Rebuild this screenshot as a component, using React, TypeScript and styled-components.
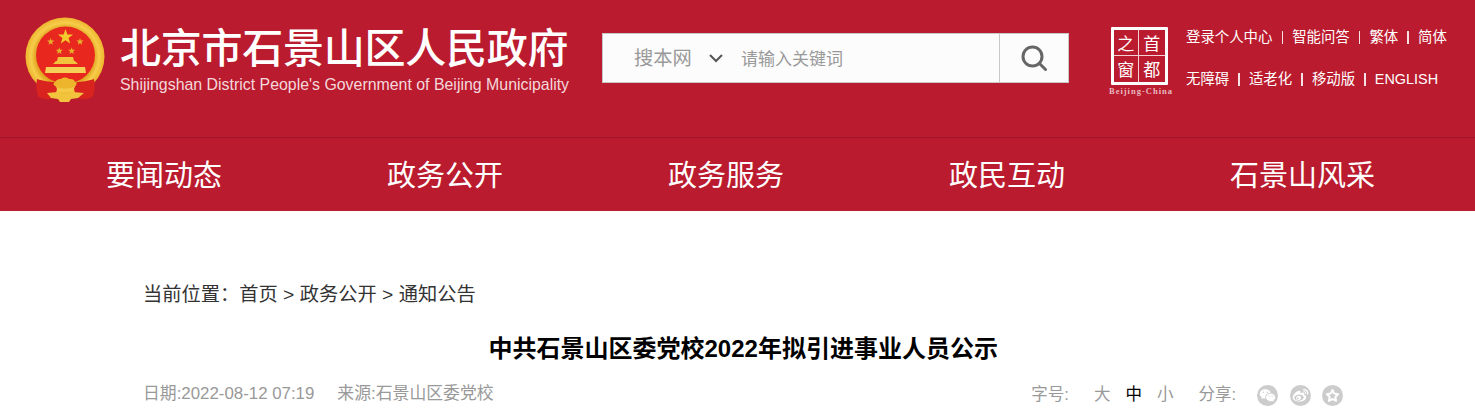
import React from "react";
import styled, { createGlobalStyle } from "styled-components";
import { RiWechatFill, RiWeiboFill } from "react-icons/ri";

const Global = createGlobalStyle`
  html, body { margin: 0; padding: 0; background: #fff; overflow: hidden; }
  body { font-family: "Liberation Sans", "Noto Sans CJK SC", sans-serif; }
`;
const Page = styled.div`width: 1475px; height: 415px; overflow: hidden;`;
const Header = styled.header`background: #bb1b2e; height: 211px;`;
const TopBar = styled.div`
  height: 138px; box-sizing: border-box; border-bottom: 1px solid #a3162a;
  display: flex; align-items: flex-start; padding-left: 25px;
`;
const Emblem = styled.svg`width: 80px; height: 86px; margin-top: 17px; flex: none;`;
const Brand = styled.div`margin-left: 15px; width: 460px; flex: none;`;
const BrandName = styled.div`
  margin-top: 21px; font: 500 41px/48px "Noto Sans CJK SC", sans-serif; color: #fff; white-space: nowrap; letter-spacing: -0.25px;
`;
const BrandEn = styled.div`
  margin-top: 6px; font: 15.9px/20px "Liberation Sans", sans-serif; color: #f3d8dc; white-space: nowrap;
`;
const Search = styled.div`
  margin: 33px 0 0 22px; width: 467px; height: 50px; box-sizing: border-box; flex: none;
  background: #fcfcfc; border: 1px solid #c8c8c8; display: flex; align-items: center;
`;
const Scope = styled.span`
  margin: -2px 0 0 31px; font: 19.3px/24px "Noto Sans CJK SC", sans-serif; color: #999; width: 58px; white-space: nowrap;
`;
const Chevron = styled.svg`width: 16px; height: 10px; margin-left: 16px; flex: none;`;
const Keyword = styled.span`
  margin-left: 17px; font: 17px/24px "Noto Sans CJK SC", sans-serif; color: #999; flex: 1; white-space: nowrap;
`;
const SearchBtn = styled.div`
  width: 69px; height: 100%; border-left: 1px solid #c8c8c8; box-sizing: border-box;
  display: flex; align-items: center; justify-content: center;
`;
const Mark = styled.div`margin: 27px 0 0 39px; width: 66px; flex: none; display: flex; flex-direction: column; align-items: center;`;
const MarkBox = styled.div`
  width: 57px; height: 58px; margin-right: 4px; box-sizing: border-box; border: 3px solid #fff; border-radius: 1px;
  display: grid; grid-template-columns: 1fr 1fr; grid-template-rows: 26px 26px; background: #bb1b2e;
`;
const MarkCell = styled.span<{ $r?: boolean; $b?: boolean }>`
  font: 17px/25px "Noto Sans CJK SC", sans-serif; color: #fff; text-align: center; overflow: hidden;
  border-right: ${(p) => (p.$r ? "1px solid #f4cfd4" : "none")};
  border-bottom: ${(p) => (p.$b ? "1px solid #f4cfd4" : "none")};
`;
const MarkEn = styled.div`font: bold 8.5px/10px "Liberation Serif", serif; color: #e8b9c0; margin-top: 1px; white-space: nowrap; letter-spacing: 1px;`;
const Links = styled.div`margin: 27px 0 0 12px; flex: none; display: flex; flex-direction: column; gap: 22px;`;
const LinkRow = styled.div`
  display: flex; align-items: center; height: 20px; color: #fff; font: 14.4px/20px "Liberation Sans", "Noto Sans CJK SC", sans-serif; white-space: nowrap;
`;
const Sep = styled.i`display: inline-block; width: 1.4px; height: 13px; background: #f6e2e5; margin: 0 9.2px;`;
const Nav = styled.nav`display: flex; height: 73px; padding: 0 0 4px 106px; box-sizing: border-box; align-items: center;`;
const NavItem = styled.a`
  width: 281px; flex: none; color: #fff; font: 29px/40px "Noto Sans CJK SC", sans-serif; white-space: nowrap; letter-spacing: -0.02px;
`;
const Main = styled.main`padding: 71px 0 0 143px; width: 1343px; box-sizing: border-box;`;
const Crumb = styled.div`font: 19.25px/26px "Liberation Sans", "Noto Sans CJK SC", sans-serif; color: #333; white-space: nowrap;`;
const Title = styled.h1`
  margin: 23px 0 0 0; padding-left: 345.5px; font: bold 24px/36px "Liberation Sans", "Noto Sans CJK SC", sans-serif; color: #000; white-space: nowrap;
`;
const Meta = styled.div`
  margin-top: 15px; display: flex; align-items: center; height: 24px; color: #999;
  font: 16.85px/24px "Liberation Sans", "Noto Sans CJK SC", sans-serif; white-space: nowrap;
`;
const Source = styled.span`margin-left: 23px;`;
const Tools = styled.div`margin-left: auto; display: flex; align-items: center; font-size: 16.5px;`;
const Sizes = styled.div`margin-left: 25px; display: flex; gap: 15px;`;
const Size = styled.span<{ $on?: boolean }>`color: ${(p) => (p.$on ? "#000" : "#999")};`;
const Share = styled.span`margin-left: 25px; margin-right: 21px;`;
const Socials = styled.div`display: flex; gap: 11.5px; margin-top: 2px;`;
const Social = styled.span`
  width: 21px; height: 21px; border-radius: 50%; background: #ccc; color: #fff;
  display: inline-flex; align-items: center; justify-content: center;
`;

const star = (cx: number, cy: number, r: number, k = 0.4) => {
  const pts: string[] = [];
  for (let i = 0; i < 10; i++) {
    const a = -Math.PI / 2 + (i * Math.PI) / 5;
    const q = i % 2 ? r * k : r;
    pts.push(`${(cx + q * Math.cos(a)).toFixed(2)},${(cy + q * Math.sin(a)).toFixed(2)}`);
  }
  return pts.join(" ");
};

const EmblemArt = () => (
  <Emblem viewBox="0 0 80 86">
    <defs>
      <radialGradient id="g" cx="50%" cy="50%" r="50%">
        <stop offset="72%" stopColor="#dfa01d" />
        <stop offset="86%" stopColor="#f6cd4a" />
        <stop offset="100%" stopColor="#eeb52f" />
      </radialGradient>
    </defs>
    <ellipse cx="40" cy="39.5" rx="39.5" ry="39" fill="url(#g)" />
    <ellipse cx="40.5" cy="38" rx="29.5" ry="28.5" fill="#e8281f" />
    <polygon points={star(40.5, 20, 8)} fill="#f4c92b" />
    <polygon points={star(25.7, 24.7, 3.8)} fill="#e6b42a" />
    <polygon points={star(55, 24.7, 3.8)} fill="#e6b42a" />
    <polygon points={star(34.3, 34, 3.8)} fill="#e6b42a" />
    <polygon points={star(46.7, 34, 3.8)} fill="#e6b42a" />
    <path d="M28 47h25l-3-3h-1l-1-4H33l-1 4h-1z" fill="#f2c33c" />
    <rect x="31" y="47" width="19" height="3" fill="#e8281f" />
    <path d="M21 50h39l1 6H20z" fill="#f5cf56" />
    <path d="M12 62c6 2 13 3 17 3l3 7c-1 5-3 9-7 10-5 1-10-1-12-3-2-6-2-11-1-17zM69 62c-6 2-13 3-17 3l-3 7c1 5 3 9 7 10 5 1 10-1 12-3 2-6 2-11 1-17z" fill="#d9231f" />
    <path d="M30 65c2-3 4-3 6-3 2-2 6-2 8 0 3 0 5 0 6 3 2 1 2 3 0 4-6 3-14 3-20 0-2-1-2-3 0-4z" fill="#ecb52c" />
    <path d="M22 76l11-1 3 2h9l3-2 11 1-6 5-7 1-2 3h-9l-2-3-7-1z" fill="#f2c33c" />
  </Emblem>
);

const items = ["要闻动态", "政务公开", "政务服务", "政民互动", "石景山风采"];

export default function App() {
  return (
    <Page>
      <Global />
      <Header>
        <TopBar>
          <EmblemArt />
          <Brand>
            <BrandName>北京市石景山区人民政府</BrandName>
            <BrandEn>Shijingshan District People's Government of Beijing Municipality</BrandEn>
          </Brand>
          <Search>
            <Scope>搜本网</Scope>
            <Chevron viewBox="0 0 16 10"><path d="M2 2l6 6 6-6" fill="none" stroke="#555" strokeWidth="2" /></Chevron>
            <Keyword>请输入关键词</Keyword>
            <SearchBtn>
              <svg width="28" height="28" viewBox="0 0 28 28">
                <circle cx="12.5" cy="12.5" r="9.5" fill="none" stroke="#666" strokeWidth="3" />
                <path d="M19.5 19.5L25.5 25.5" stroke="#666" strokeWidth="3" strokeLinecap="round" />
              </svg>
            </SearchBtn>
          </Search>
          <Mark>
            <MarkBox>
              <MarkCell $r $b>之</MarkCell>
              <MarkCell $b>首</MarkCell>
              <MarkCell $r>窗</MarkCell>
              <MarkCell>都</MarkCell>
            </MarkBox>
            <MarkEn>Beijing-China</MarkEn>
          </Mark>
          <Links>
            <LinkRow>登录个人中心<Sep />智能问答<Sep />繁体<Sep />简体</LinkRow>
            <LinkRow>无障碍<Sep />适老化<Sep />移动版<Sep />ENGLISH</LinkRow>
          </Links>
        </TopBar>
        <Nav>
          {items.map((t) => <NavItem key={t}>{t}</NavItem>)}
        </Nav>
      </Header>
      <Main>
        <Crumb>当前位置：首页 &gt; 政务公开 &gt; 通知公告</Crumb>
        <Title>中共石景山区委党校2022年拟引进事业人员公示</Title>
        <Meta>
          <span>日期:2022-08-12 07:19</span>
          <Source>来源:石景山区委党校</Source>
          <Tools>
            <span>字号:</span>
            <Sizes>
              <Size>大</Size>
              <Size $on>中</Size>
              <Size>小</Size>
            </Sizes>
            <Share>分享:</Share>
            <Socials>
              <Social><RiWechatFill size={17} /></Social>
              <Social><RiWeiboFill size={17} /></Social>
              <Social>
                <svg width="15" height="15" viewBox="0 0 15 15">
                  <polygon points={star(7.5, 8, 6, 0.5)} fill="none" stroke="#fff" strokeWidth="2" strokeLinejoin="round" />
                </svg>
              </Social>
            </Socials>
          </Tools>
        </Meta>
      </Main>
    </Page>
  );
}
